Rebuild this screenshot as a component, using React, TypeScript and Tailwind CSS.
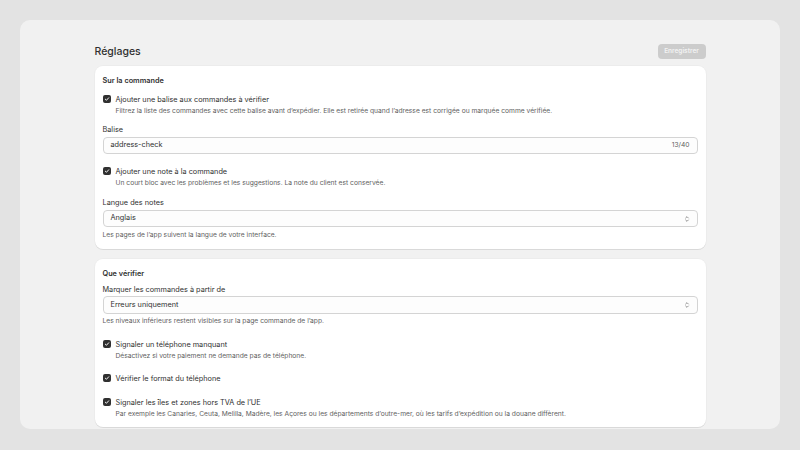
import React from 'react';

// Case cochée façon Polaris
const Check: React.FC = () => (
  <span className="flex h-[8px] w-[8px] shrink-0 items-center justify-center rounded-[2px] bg-[#303030]">
    <svg viewBox="0 0 10 10" className="h-[6px] w-[6px]" fill="none">
      <path d="M2.2 5.3 4.1 7.1 7.8 3" stroke="white" strokeWidth="1.6" strokeLinecap="round" strokeLinejoin="round" />
    </svg>
  </span>
);

const Chevrons: React.FC = () => (
  <svg viewBox="0 0 8 12" className="h-[8px] w-[6px]" fill="none">
    <path d="M2 4.5 4 2.5 6 4.5M2 7.5 4 9.5 6 7.5" stroke="#5c5c5c" strokeWidth="1" strokeLinecap="round" strokeLinejoin="round" />
  </svg>
);

const CheckRow: React.FC<{ label: string; help?: string; className?: string }> = ({ label, help, className }) => (
  <div className={className}>
    <div className="flex h-[12px] items-center gap-[5px]">
      <Check />
      <span className="pt-[1px] text-[7.3px] leading-[12px] text-[#303030]">{label}</span>
    </div>
    {help && <p className="mt-[1px] pl-[13px] text-[6.7px] leading-[11px] text-[#616161]">{help}</p>}
  </div>
);

const Label: React.FC<{ children: React.ReactNode; className?: string }> = ({ children, className }) => (
  <p className={`text-[7.3px] leading-[12px] text-[#303030] ${className ?? ''}`}>{children}</p>
);

const SelectBox: React.FC<{ value: string; className?: string }> = ({ value, className }) => (
  <div className={`flex items-center justify-between rounded-[4px] border border-[#d4d4d4] bg-[#fdfdfd] px-[7px] ${className ?? ''}`}>
    <span className="text-[7.3px] text-[#303030]">{value}</span>
    <Chevrons />
  </div>
);

const Card: React.FC<{ children: React.ReactNode; className?: string }> = ({ children, className }) => (
  <section className={`rounded-[8px] bg-white px-[8px] shadow-[0_1px_0_rgba(0,0,0,0.08),0_0_0_1px_rgba(0,0,0,0.02)] ${className ?? ''}`}>
    {children}
  </section>
);

export default function App() {
  return (
    <div className="h-[450px] w-[800px] bg-[#e3e3e3] p-[20px] pb-[21px] font-['Inter',sans-serif]">
      <div className="h-[409px] overflow-hidden rounded-[10px] bg-[#f1f1f1] pt-[24px]">
        <div className="mx-auto w-[611px]">
          <div className="flex h-[15px] items-center justify-between">
            <h1 className="pt-[1px] text-[10.5px] font-medium text-[#303030]">Réglages</h1>
            <button className="h-[15px] w-[48px] rounded-[4px] bg-[#cccccc] text-[6.5px] font-semibold text-[#f3f3f3]">
              Enregistrer
            </button>
          </div>

          <Card className="mt-[7px] pt-[9px] pb-[8px]">
            <h2 className="text-[7.3px] font-semibold leading-[12px] text-[#303030]">Sur la commande</h2>
            <CheckRow
              className="mt-[6px]"
              label="Ajouter une balise aux commandes à vérifier"
              help="Filtrez la liste des commandes avec cette balise avant d’expédier. Elle est retirée quand l’adresse est corrigée ou marquée comme vérifiée."
            />
            <Label className="mt-[7px]">Balise</Label>
            <div className="mt-[1px] flex h-[17px] items-center justify-between rounded-[4px] border border-[#d4d4d4] bg-[#fdfdfd] px-[7px]">
              <span className="text-[7.3px] text-[#303030]">address-check</span>
              <span className="text-[6.7px] text-[#616161]">13/40</span>
            </div>
            <CheckRow
              className="mt-[11px]"
              label="Ajouter une note à la commande"
              help="Un court bloc avec les problèmes et les suggestions. La note du client est conservée."
            />
            <Label className="mt-[8px]">Langue des notes</Label>
            <SelectBox className="mt-[1px] h-[17px]" value="Anglais" />
            <p className="mt-[3px] text-[6.7px] leading-[11px] text-[#616161]">Les pages de l’app suivent la langue de votre interface.</p>
          </Card>

          <Card className="mt-[10px] pt-[9px] pb-[7px]">
            <h2 className="text-[7.3px] font-semibold leading-[12px] text-[#303030]">Que vérifier</h2>
            <Label className="mt-[4px]">Marquer les commandes à partir de</Label>
            <SelectBox className="h-[18px]" value="Erreurs uniquement" />
            <p className="mt-[2px] text-[6.7px] leading-[11px] text-[#616161]">
              Les niveaux inférieurs restent visibles sur la page commande de l’app.
            </p>
            <CheckRow
              className="mt-[11px]"
              label="Signaler un téléphone manquant"
              help="Désactivez si votre paiement ne demande pas de téléphone."
            />
            <CheckRow className="mt-[10px]" label="Vérifier le format du téléphone" />
            <CheckRow
              className="mt-[12px]"
              label="Signaler les îles et zones hors TVA de l’UE"
              help="Par exemple les Canaries, Ceuta, Melilla, Madère, les Açores ou les départements d’outre-mer, où les tarifs d’expédition ou la douane diffèrent."
            />
          </Card>
        </div>
      </div>
    </div>
  );
}
